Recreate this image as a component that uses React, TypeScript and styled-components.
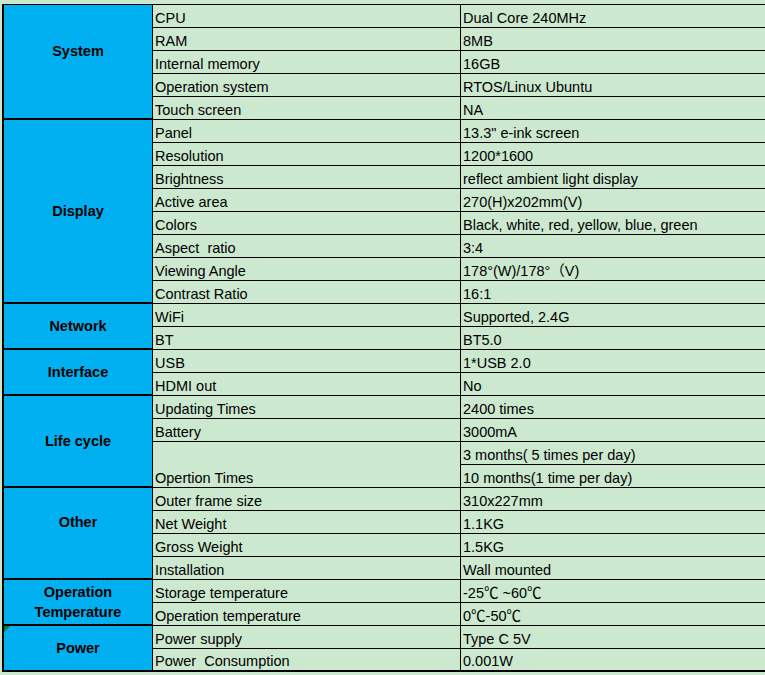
import React from 'react';
import styled, { createGlobalStyle } from 'styled-components';

const GlobalStyle = createGlobalStyle`
	html, body {
		margin: 0;
		padding: 0;
		background: #cce8cf;
	}
	body {
		font-family: 'Liberation Sans', Arial, 'Noto Sans CJK SC', sans-serif;
		color: #000;
	}
`;

const Sheet = styled.div`
	width: 765px;
	height: 675px;
	overflow: hidden;
	padding-top: 4px;
	box-sizing: border-box;
`;

const Table = styled.div`
	display: flex;
	flex-direction: column;
	margin-left: 2px;
	border-top: 1px solid #000;
	border-left: 2px solid #000;
`;

const Group = styled.div`
	display: flex;
`;

interface CategoryProps {
	$lift?: number;
	$flag?: boolean;
}

const Category = styled.div<CategoryProps>`
	position: relative;
	width: 149px;
	flex: none;
	box-sizing: border-box;
	display: flex;
	align-items: center;
	justify-content: center;
	text-align: center;
	background: #00b0f0;
	border-right: 1px solid #000;
	border-bottom: 2px solid #000;
	padding-bottom: ${({ $lift }) => $lift || 0}px;
	font-size: 14.5px;
	font-weight: bold;
	line-height: 20px;

	&::before {
		content: '';
		display: ${({ $flag }) => ($flag ? 'block' : 'none')};
		position: absolute;
		top: 0;
		left: 0;
		border-top: 6px solid #1f7a1f;
		border-right: 6px solid transparent;
	}
`;

const Rows = styled.div`
	flex: 1;
	display: flex;
	flex-direction: column;
`;

const Row = styled.div`
	display: flex;
`;

interface CellProps {
	$tall?: boolean;
	$last?: boolean;
}

const Label = styled.div<CellProps>`
	width: 308px;
	flex: none;
	height: ${({ $tall }) => ($tall ? 46 : 23)}px;
	box-sizing: border-box;
	display: flex;
	align-items: flex-end;
	padding: 0 0 0 2px;
	border-right: 1px solid #000;
	border-bottom: ${({ $last }) => ($last ? 2 : 1)}px solid #000;
	font-size: 14.5px;
	line-height: 17px;
	white-space: pre;
`;

const Values = styled.div`
	flex: 1;
	display: flex;
	flex-direction: column;
`;

const Value = styled.div<CellProps>`
	flex: 1;
	height: 23px;
	box-sizing: border-box;
	display: flex;
	align-items: flex-end;
	padding: 0 0 0 2px;
	border-bottom: ${({ $last }) => ($last ? 2 : 1)}px solid #000;
	font-size: 14.5px;
	line-height: 17px;
	white-space: pre;
`;

type Spec = [string, string | string[]];

interface GroupSpec {
	name: string[];
	lift?: number;
	flag?: boolean;
	rows: Spec[];
}

const groups: GroupSpec[] = [
	{
		name: ['System'],
		lift: 22,
		rows: [
			['CPU', 'Dual Core 240MHz'],
			['RAM', '8MB'],
			['Internal memory', '16GB'],
			['Operation system', 'RTOS/Linux Ubuntu'],
			['Touch screen', 'NA'],
		],
	},
	{
		name: ['Display'],
		rows: [
			['Panel', '13.3" e-ink screen'],
			['Resolution', '1200*1600'],
			['Brightness', 'reflect ambient light display'],
			['Active area', '270(H)x202mm(V)'],
			['Colors', 'Black, white, red, yellow, blue, green'],
			['Aspect  ratio', '3:4'],
			['Viewing Angle', '178°(W)/178°（V)'],
			['Contrast Ratio', '16:1'],
		],
	},
	{
		name: ['Network'],
		rows: [
			['WiFi', 'Supported, 2.4G'],
			['BT', 'BT5.0'],
		],
	},
	{
		name: ['Interface'],
		rows: [
			['USB', '1*USB 2.0'],
			['HDMI out', 'No'],
		],
	},
	{
		name: ['Life cycle'],
		rows: [
			['Updating Times', '2400 times'],
			['Battery', '3000mA'],
			['Opertion Times', ['3 months( 5 times per day)', '10 months(1 time per day)']],
		],
	},
	{
		name: ['Other'],
		lift: 23,
		rows: [
			['Outer frame size', '310x227mm'],
			['Net Weight', '1.1KG'],
			['Gross Weight', '1.5KG'],
			['Installation', 'Wall mounted'],
		],
	},
	{
		name: ['Operation', 'Temperature'],
		rows: [
			['Storage temperature', '-25℃ ~60℃'],
			['Operation temperature', '0℃-50℃'],
		],
	},
	{
		name: ['Power'],
		flag: true,
		rows: [
			['Power supply', 'Type C 5V'],
			['Power  Consumption', '0.001W'],
		],
	},
];

const App: React.FC = () => (
	<>
		<GlobalStyle />
		<Sheet>
			<Table>
				{groups.map((g, gi) => {
					const lastGroup = gi === groups.length - 1;
					return (
						<Group key={g.name.join(' ')}>
							<Category $lift={g.lift} $flag={g.flag}>
								<div>
									{g.name.map((n) => (
										<div key={n}>{n}</div>
									))}
								</div>
							</Category>
							<Rows>
								{g.rows.map(([label, value], ri) => {
									const last = lastGroup && ri === g.rows.length - 1;
									if (Array.isArray(value)) {
										return (
											<Row key={label}>
												<Label $tall $last={last}>{label}</Label>
												<Values>
													{value.map((v, vi) => (
														<Value key={v} $last={last && vi === value.length - 1}>
															{v}
														</Value>
													))}
												</Values>
											</Row>
										);
									}
									return (
										<Row key={label}>
											<Label $last={last}>{label}</Label>
											<Value $last={last}>{value}</Value>
										</Row>
									);
								})}
							</Rows>
						</Group>
					);
				})}
			</Table>
		</Sheet>
	</>
);

export default App;
